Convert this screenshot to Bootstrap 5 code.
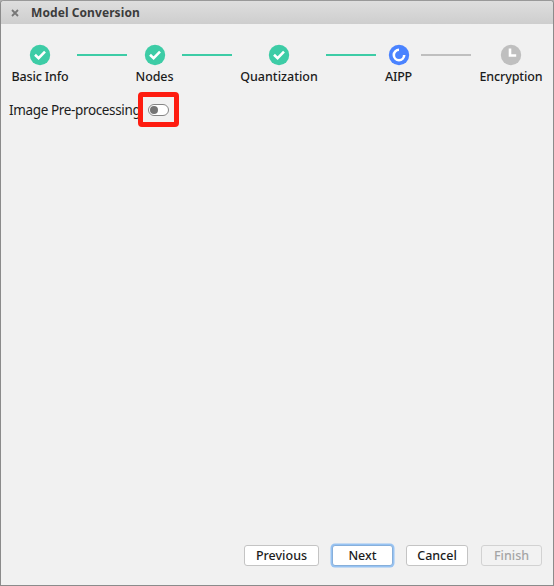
<!DOCTYPE html>
<html lang="en">
<head>
<meta charset="utf-8">
<meta name="viewport" content="width=device-width, initial-scale=1">
<title>Model Conversion</title>
<link href="https://cdn.jsdelivr.net/npm/bootstrap@5.3.0/dist/css/bootstrap.min.css" rel="stylesheet">
<style>
body { font-family: "Noto Sans", "Open Sans", sans-serif; font-size: 12.5px; line-height: 18px; color: #1c1c1c; background: #b0b0b0; }
.dialog-window { height: 586px; background: #f1f1f1; border: 1px solid #8b8b8b; border-top-color: #999; border-radius: 4px 4px 0 0; }
.title-bar { height: 23px; padding-left: 10px; background: linear-gradient(#dedede, #cecece); border-radius: 3px 3px 0 0; color: #3c3c3c; font-size: 12px; letter-spacing: .08px; }
.title-bar svg { margin-right: 12px; }
.stepper { padding: 20px 11px 0; gap: 9px; }
.step { white-space: nowrap; font-weight: 500; }
.step svg { width: 22px; height: 22px; margin-bottom: 2px; }
.step-line { width: 50px; height: 2px; margin-top: 10px; background: #3dcca6; }
.step-line.waiting { background: #bfbfbf; }
.w-basic { width: 56px; letter-spacing: -.16px; }
.w-nodes { width: 37px; letter-spacing: -.1px; }
.w-quant { width: 76px; letter-spacing: 0; }
.w-aipp { width: 27px; letter-spacing: -.2px; }
.w-encr { width: 62px; letter-spacing: -.1px; }
.option-row { height: 35px; margin-top: 6px; padding-left: 8px; }
.option-label { width: 129px; font-size: 13.5px; letter-spacing: -.36px; white-space: nowrap; }
.highlight { width: 41px; height: 35px; border: 5px solid #fe1c10; border-radius: 4px; }
.toggle { width: 21px; height: 12px; padding: 1px; background: #fff; border: 1px solid #858585; border-radius: 6px; }
.toggle-knob { width: 8px; height: 8px; background: #757575; border-radius: 50%; }
.actions { padding: 0 11px 19px 0; }
.actions .btn { width: 61px; height: 21px; margin-left: 13px; padding: 0; font-size: 12.5px; font-weight: 500; line-height: 18px; color: #1c1c1c; background: #fff; border: 1px solid #c4c4c4; border-radius: 3px; }
.actions .btn-prev { width: 75px; }
.actions .btn-next { width: 61px; border-color: #87afda; box-shadow: 0 0 0 1.5px #97c3f3; }
.actions .btn-cancel { width: 62px; }
.actions .btn:disabled { color: #a5a5a5; background: #f2f2f2; border-color: #d2d2d2; opacity: 1; }
</style>
</head>
<body>
<div class="dialog-window d-flex flex-column overflow-hidden">
  <header class="title-bar d-flex align-items-center fw-bold flex-shrink-0">
    <svg width="8" height="8" viewBox="0 0 8 8"><path d="M1 1L7 7M7 1L1 7" stroke="#777" stroke-width="1.8"/></svg>
    <span>Model Conversion</span>
  </header>
  <div class="stepper d-flex align-items-start">
    <div class="step w-basic d-flex flex-column align-items-center">
      <svg viewBox="0 0 22 22"><circle cx="11" cy="11" r="10.2" fill="#3dcca6"/><path d="M6 10.7L9.6 14.1L16 7.7" fill="none" stroke="#fff" stroke-width="2.6"/></svg>
      <span>Basic Info</span>
    </div>
    <div class="step-line"></div>
    <div class="step w-nodes d-flex flex-column align-items-center">
      <svg viewBox="0 0 22 22"><circle cx="11" cy="11" r="10.2" fill="#3dcca6"/><path d="M6 10.7L9.6 14.1L16 7.7" fill="none" stroke="#fff" stroke-width="2.6"/></svg>
      <span>Nodes</span>
    </div>
    <div class="step-line"></div>
    <div class="step w-quant d-flex flex-column align-items-center">
      <svg viewBox="0 0 22 22"><circle cx="11" cy="11" r="10.2" fill="#3dcca6"/><path d="M6 10.7L9.6 14.1L16 7.7" fill="none" stroke="#fff" stroke-width="2.6"/></svg>
      <span>Quantization</span>
    </div>
    <div class="step-line"></div>
    <div class="step w-aipp d-flex flex-column align-items-center">
      <svg viewBox="0 0 22 22"><circle cx="11" cy="11" r="10.2" fill="#4a83ff"/><path d="M11 5.8A5.2 5.2 0 1 0 16.2 11" fill="none" stroke="#fff" stroke-width="2.6"/></svg>
      <span>AIPP</span>
    </div>
    <div class="step-line waiting"></div>
    <div class="step w-encr d-flex flex-column align-items-center">
      <svg viewBox="0 0 22 22"><circle cx="11" cy="11" r="10.2" fill="#bfbfbf"/><path d="M10 4.5V11.5H16.2" fill="none" stroke="#fff" stroke-width="2.6"/></svg>
      <span>Encryption</span>
    </div>
  </div>
  <div class="option-row d-flex align-items-center">
    <span class="option-label">Image Pre-processing</span>
    <div class="highlight d-flex align-items-center justify-content-center">
      <div class="toggle" role="switch" aria-checked="false" aria-label="Image Pre-processing"><div class="toggle-knob"></div></div>
    </div>
  </div>
  <footer class="actions d-flex justify-content-end mt-auto">
    <button class="btn btn-prev" type="button">Previous</button>
    <button class="btn btn-next" type="button">Next</button>
    <button class="btn btn-cancel" type="button">Cancel</button>
    <button class="btn" type="button" disabled>Finish</button>
  </footer>
</div>
<script src="https://cdn.jsdelivr.net/npm/bootstrap@5.3.0/dist/js/bootstrap.bundle.min.js"></script>
</body>
</html>
